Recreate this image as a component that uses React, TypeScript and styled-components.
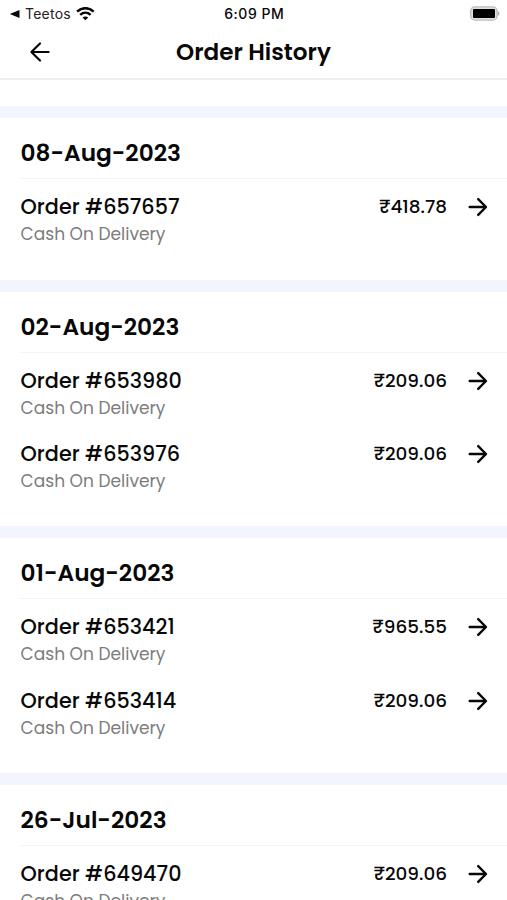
import React from 'react';
import styled, { createGlobalStyle } from 'styled-components';

const GlobalStyle = createGlobalStyle`
  * { box-sizing: border-box; }
  body {
    margin: 0;
    background: #fff;
    color: #080808;
    font-family: Poppins, Inter, sans-serif;
  }
`;

const Screen = styled.div`
  height: 900px;
  overflow: hidden;
  display: flex;
  flex-direction: column;
  background: #fff;
`;

const StatusBar = styled.div`
  height: 26px;
  flex: none;
  display: grid;
  grid-template-columns: 1fr auto 1fr;
  align-items: center;
  padding: 2px 7.5px 0 9px;
  font-family: Inter, sans-serif;
  font-size: 14px;
  line-height: 24px;
`;

const BackToApp = styled.div`
  display: flex;
  align-items: center;
  gap: 5px;
  color: #222;
  letter-spacing: 0.25px;
`;

const Clock = styled.div`
  font-weight: 500;
  letter-spacing: 0.5px;
`;

const BatterySlot = styled.div`
  display: flex;
  justify-content: flex-end;
`;

const Header = styled.header`
  height: 54px;
  flex: none;
  display: grid;
  grid-template-columns: 60px 1fr 60px;
  align-items: center;
  border-bottom: 2px solid #eee;
`;

const BackButton = styled.button`
  border: 0;
  padding: 0 0 0 28px;
  background: none;
  display: flex;
`;

const Title = styled.h1`
  margin: 0;
  text-align: center;
  font-size: 23.1px;
  line-height: 51px;
  font-weight: 600;
`;

const OrderList = styled.main`
  padding-top: 26.45px;
`;

const DayGroup = styled.section`
  border-top: 12px solid #f3f5fe;
  padding-bottom: 26.9px;
`;

const DayHeading = styled.h2`
  margin: 0 0 0 20.5px;
  height: 61px;
  border-bottom: 1px solid #f3f3f3;
  font-size: 23.25px;
  line-height: 70.2px;
  font-weight: 600;
  white-space: nowrap;
`;

const OrderRow = styled.div`
  height: 73.4px;
  display: flex;
  align-items: flex-start;
  padding: 11px 17px 0 20.6px;
`;

const OrderInfo = styled.div`
  flex: 1;
`;

const OrderName = styled.div`
  font-size: 20.75px;
  line-height: 34px;
  font-weight: 500;
  white-space: nowrap;
`;

const Payment = styled.div`
  font-size: 17.05px;
  line-height: 20px;
  color: #7d7d7d;
`;

const Price = styled.div`
  font-size: 18.4px;
  line-height: 34px;
  font-weight: 500;
`;

const OpenButton = styled.button`
  height: 34px;
  margin-left: 21px;
  padding: 0;
  border: 0;
  background: none;
  display: flex;
  align-items: center;
`;

type Order = { id: string; price: string };
type Day = { date: string; orders: Order[] };

const days: Day[] = [
  { date: '08-Aug-2023', orders: [{ id: '657657', price: '418.78' }] },
  {
    date: '02-Aug-2023',
    orders: [
      { id: '653980', price: '209.06' },
      { id: '653976', price: '209.06' },
    ],
  },
  {
    date: '01-Aug-2023',
    orders: [
      { id: '653421', price: '965.55' },
      { id: '653414', price: '209.06' },
    ],
  },
  { date: '26-Jul-2023', orders: [{ id: '649470', price: '209.06' }] },
];

const ForwardArrow = () => (
  <svg width="22" height="22" viewBox="0 0 22 22" fill="none" stroke="#080808" strokeWidth="2.4">
    <path d="M1.7 11h16M10.2 3.1l7.8 7.9-7.8 7.9" strokeLinecap="round" strokeLinejoin="round" />
  </svg>
);

const BackArrow = () => (
  <svg width="24" height="24" viewBox="0 0 24 24" fill="none" stroke="#080808" strokeWidth="2.2">
    <path d="M20.6 12H4M12 3.5L3.4 12l8.6 8.5" strokeLinecap="round" strokeLinejoin="round" />
  </svg>
);

const Wifi = () => (
  <svg width="20" height="14" viewBox="0 0 20 14" fill="none" stroke="#080808" strokeWidth="2.5">
    <path d="M1.1 4.6C6 0 12.8 0 17.7 4.6" />
    <path d="M4.2 7.9c3.1-2.8 7.3-2.8 10.4 0" />
    <path d="M6.5 10.6c1.7-1.5 4.1-1.5 5.8 0L9.4 13.3z" fill="#080808" stroke="none" />
  </svg>
);

const Battery = () => (
  <svg width="35.5" height="16" viewBox="0 0 35.5 16">
    <rect x="6.7" y="0.9" width="26.4" height="13.2" rx="4.2" fill="#e0e0e0" stroke="#bdbdbd" strokeWidth="1.4" />
    <rect x="9" y="3.1" width="22" height="8.8" rx="1" fill="#000" />
    <path d="M33.8 5.3c2.2.7 2.2 3.7 0 4.4z" fill="#aaa" />
  </svg>
);

const BackTriangle = () => (
  <svg width="11" height="10" viewBox="0 0 11 10">
    <path d="M.8 5L10.5.9v8.2z" fill="#080808" />
  </svg>
);

export default function App() {
  return (
    <Screen>
      <GlobalStyle />
      <StatusBar>
        <BackToApp>
          <BackTriangle />
          <span>Teetos</span>
          <Wifi />
        </BackToApp>
        <Clock>6:09 PM</Clock>
        <BatterySlot>
          <Battery />
        </BatterySlot>
      </StatusBar>
      <Header>
        <BackButton aria-label="Back">
          <BackArrow />
        </BackButton>
        <Title>Order History</Title>
      </Header>
      <OrderList>
        {days.map(({ date, orders }) => (
          <DayGroup key={date}>
            <DayHeading>{date}</DayHeading>
            {orders.map((order) => (
              <OrderRow key={order.id}>
                <OrderInfo>
                  <OrderName>Order #{order.id}</OrderName>
                  <Payment>Cash On Delivery</Payment>
                </OrderInfo>
                <Price>₹{order.price}</Price>
                <OpenButton aria-label={`Open order ${order.id}`}>
                  <ForwardArrow />
                </OpenButton>
              </OrderRow>
            ))}
          </DayGroup>
        ))}
      </OrderList>
    </Screen>
  );
}
